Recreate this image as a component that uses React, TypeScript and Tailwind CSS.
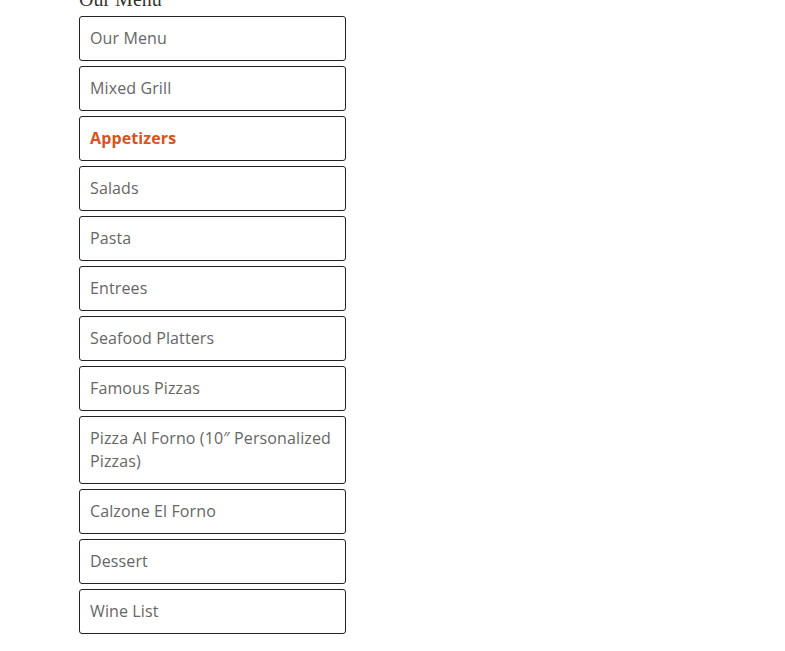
const items = [
  "Our Menu",
  "Mixed Grill",
  "Appetizers",
  "Salads",
  "Pasta",
  "Entrees",
  "Seafood Platters",
  "Famous Pizzas",
  "Pizza Al Forno (10″ Personalized Pizzas)",
  "Calzone El Forno",
  "Dessert",
  "Wine List",
];

export default function App() {
  return (
    <div className="min-h-screen w-full bg-white font-['Open_Sans',sans-serif]">
      <div className="ml-[79px] w-[267px]">
        {/* widget title, scrolled partly out of view */}
        <h2 className="-mt-[17px] mb-[1px] h-[32px] font-['Liberation_Serif',serif] text-[20px] leading-[32px] text-[#333]">
          Our Menu
        </h2>
        <ul className="flex flex-col gap-[5px]">
          {items.map((item) => {
            const active = item === "Appetizers";
            return (
              <li key={item}>
                <a
                  href="#"
                  className={
                    active
                      ? "block rounded-[3px] border border-[#222] px-[10px] py-[10px] text-[16px] font-bold leading-[23px] tracking-[0.12px] text-[#d9531e]"
                      : "block rounded-[3px] border border-[#222] px-[10px] py-[10px] text-[16px] leading-[23px] tracking-[0.12px] text-[#666]"
                  }
                >
                  {item}
                </a>
              </li>
            );
          })}
        </ul>
      </div>
    </div>
  );
}
